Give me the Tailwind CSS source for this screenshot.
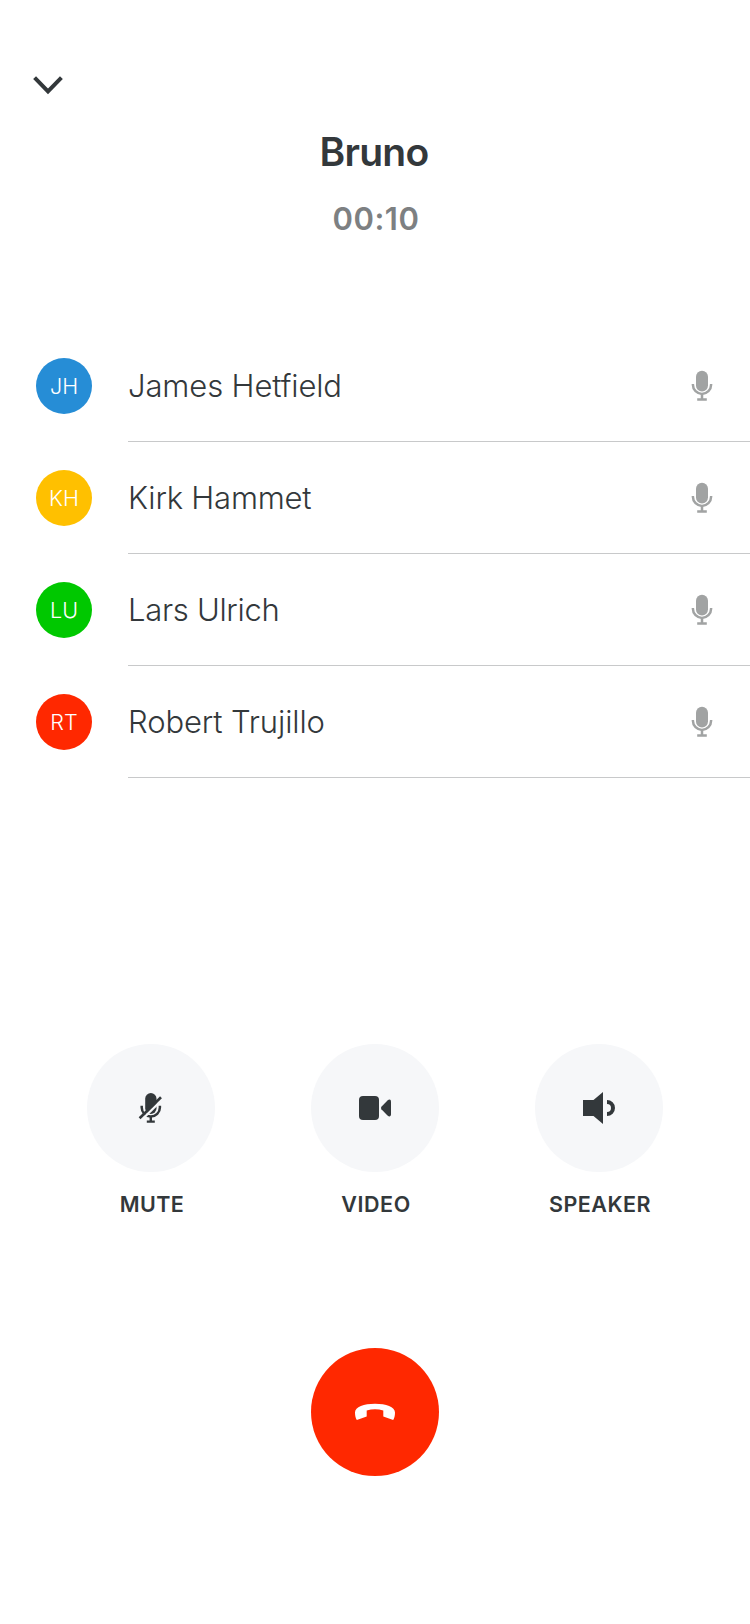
<!DOCTYPE html>
<html lang="en">
<head>
<meta charset="utf-8">
<title>Call</title>
<script src="https://cdn.jsdelivr.net/npm/@tailwindcss/browser@4"></script>
</head>
<body class="bg-white font-['Inter',sans-serif] text-[#33383b]">
<svg class="hidden">
  <symbol id="mic" viewBox="0 0 24 32">
    <rect x="6" y="0.8" width="12" height="20.6" rx="6" fill="#a1a3a3"/>
    <path d="M2.900 14v.8a9.100 9.100 0 0 0 18.200 0V14M12 24v5M7.200 29.600h9.600" fill="none" stroke="#a1a3a3" stroke-width="2.500"/>
  </symbol>
</svg>
<main class="flex h-[1624px] w-[750px] flex-col">
  <header class="flex h-[330px] flex-col">
    <button class="ml-8 mt-[72px] h-6 w-8" aria-label="Minimize">
      <svg class="h-6 w-8" viewBox="0 0 32 24" fill="none" stroke="#33383b" stroke-width="4"><path d="M2.600 5.600 16 19.400 29.400 5.600"/></svg>
    </button>
    <h1 class="mt-[32px] pr-0.5 text-center text-[39px] leading-12 font-semibold tracking-[-0.75px]">Bruno</h1>
    <p class="mt-[23px] pl-0.5 text-center text-[31px] leading-10 font-semibold tracking-[0.5px] text-[#7d8082]">00:10</p>
  </header>

  <ul>
    <li class="flex h-28 items-stretch pl-9">
      <span class="mt-7 flex size-14 items-center justify-center rounded-full bg-[#268dd6] text-[21.5px] font-light text-white">JH</span>
      <div class="ml-9 flex flex-1 items-center border-b border-[#c8c9ca] pr-9">
        <span class="flex-1 pt-0.5 text-[31px] font-light tracking-[-0.12px]">James Hetfield</span>
        <svg class="h-8 w-6"><use href="#mic"/></svg>
      </div>
    </li>
    <li class="flex h-28 items-stretch pl-9">
      <span class="mt-7 flex size-14 items-center justify-center rounded-full bg-[#ffc000] text-[21.5px] font-light text-white">KH</span>
      <div class="ml-9 flex flex-1 items-center border-b border-[#c8c9ca] pr-9">
        <span class="flex-1 pt-0.5 text-[31px] font-light tracking-[-0.2px]">Kirk Hammet</span>
        <svg class="h-8 w-6"><use href="#mic"/></svg>
      </div>
    </li>
    <li class="flex h-28 items-stretch pl-9">
      <span class="mt-7 flex size-14 items-center justify-center rounded-full bg-[#00c800] text-[21.5px] font-light text-white">LU</span>
      <div class="ml-9 flex flex-1 items-center border-b border-[#c8c9ca] pr-9">
        <span class="flex-1 pt-0.5 text-[31px] font-light tracking-[-0.3px]">Lars Ulrich</span>
        <svg class="h-8 w-6"><use href="#mic"/></svg>
      </div>
    </li>
    <li class="flex h-28 items-stretch pl-9">
      <span class="mt-7 flex size-14 items-center justify-center rounded-full bg-[#ff2800] text-[21.5px] font-light text-white">RT</span>
      <div class="ml-9 flex flex-1 items-center border-b border-[#c8c9ca] pr-9">
        <span class="flex-1 pt-0.5 text-[31px] font-light tracking-[-0.12px]">Robert Trujillo</span>
        <svg class="h-8 w-6"><use href="#mic"/></svg>
      </div>
    </li>
  </ul>

  <section class="mt-[266px] flex justify-center gap-24">
    <div class="flex w-32 flex-col items-center">
      <button class="flex size-32 items-center justify-center rounded-full bg-[#f6f7f9]" aria-label="Mute">
        <svg class="size-12" viewBox="127 1084 48 48" fill="none" stroke="#33383b">
          <rect x="145.200" y="1093" width="11.300" height="21" rx="5.650" fill="#33383b" stroke="none"/>
          <path d="M141.700 1105.800v1.700a9.100 9.100 0 0 0 18.200 0v-1.700" stroke-width="2.500"/>
          <path d="M150.800 1116.500v5.500M146.800 1121.600h8" stroke-width="2.400"/>
          <path d="M140.800 1120.600 162.600 1099.100" stroke="#f6f7f9" stroke-width="2.300"/>
          <path d="M139.600 1118.200 161 1097.300" stroke-width="2.600"/>
        </svg>
      </button>
      <span class="mt-[16px] pl-0.5 text-[21.5px] leading-8 font-[570] tracking-[0.4px]">MUTE</span>
    </div>
    <div class="flex w-32 flex-col items-center">
      <button class="flex size-32 items-center justify-center rounded-full bg-[#f6f7f9]" aria-label="Video">
        <svg class="size-12" viewBox="351 1084 48 48" fill="#33383b">
          <rect x="359" y="1096" width="20" height="24" rx="4"/>
          <path d="M381.400 1106.700 387.500 1100.400Q388.600 1099.600 389.600 1099.600Q391 1099.800 391 1101.400V1114.600Q391 1116.200 389.600 1116.400Q388.600 1116.400 387.500 1115.400L381.400 1109.200Q380.500 1108 381.400 1106.700Z"/>
        </svg>
      </button>
      <span class="mt-[16px] pl-0.5 text-[21.5px] leading-8 font-[570] tracking-[0.6px]">VIDEO</span>
    </div>
    <div class="flex w-32 flex-col items-center">
      <button class="flex size-32 items-center justify-center rounded-full bg-[#f6f7f9]" aria-label="Speaker">
        <svg class="size-12" viewBox="575 1084 48 48" fill="#33383b">
          <path d="M583 1100h10.500l9.500-8v32l-9.500-8H583z"/>
          <path d="M607 1102a6 6 0 0 1 0 12" fill="none" stroke="#33383b" stroke-width="4"/>
        </svg>
      </button>
      <span class="mt-[16px] pl-0.5 text-[21.5px] leading-8 font-[570] tracking-[0.5px]">SPEAKER</span>
    </div>
  </section>

  <button class="mx-auto mt-[128px] flex size-32 items-center justify-center rounded-full bg-[#ff2800]" aria-label="End call">
    <svg class="size-12" viewBox="351 1388 48 48" fill="#fff"><path d="M355 1412.500C355 1406.500 364 1403.700 375 1403.700S395 1406.500 395 1412.500C395 1415.500 394.400 1418 393.200 1420L383.300 1416.600V1410.400Q375 1408.200 366.700 1410.400V1416.600L356.800 1420C355.600 1418 355 1415.500 355 1412.500Z"/></svg>
  </button>
</main>
</body>
</html>
